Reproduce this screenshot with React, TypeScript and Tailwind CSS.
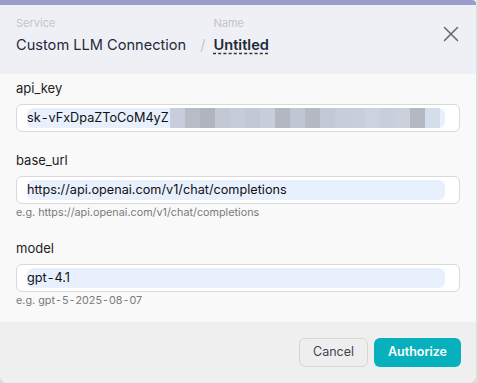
import React from "react";

const blocks = [
  "#c7cdda", "#b8bcc6", "#b0b4be", "#c2c8d4", "#c6ccd8", "#c2c8d4", "#c8ced9", "#b3b7c1",
  "#c0c6d2", "#b4b9c3", "#c3c9d5", "#c7cdd9", "#c9cfda", "#cdd3de", "#c9cfda", "#cbd1dc", "#b4b8c2", "#d5dcea",
];

function H() {
  return <span className="mx-[1px]">-</span>;
}

function Field({ label, children, hint }: { label: string; children: React.ReactNode; hint?: React.ReactNode }) {
  return (
    <div className="flex flex-col">
      <div className="text-[13px] leading-[18px] text-[#222]">{label}</div>
      <div className="mt-[7px] h-[28px] rounded-[6px] border border-[#d9d9d9] bg-white flex items-center pl-[10px] pr-[14px]">
        {children}
      </div>
      {hint && <div className="mt-[2px] text-[10.8px] leading-[14px] text-[#7a7a7a] whitespace-nowrap">{hint}</div>}
    </div>
  );
}

export default function App() {
  return (
    <div className="w-[478px] h-[383px] bg-[#dcdcdc] overflow-hidden" style={{ fontFamily: "Inter, 'Noto Sans', sans-serif" }}>
      <div className="w-[476px] h-[383px] rounded-b-[8px] overflow-hidden flex flex-col bg-[#f9f9f9]">
        <div className="h-[5px] bg-[#9b9bcb] rounded-tr-[4px]" />
        <div className="h-[69px] bg-[#eff0f5] flex pl-[16px] pt-[10px] relative">
          <div className="flex flex-col">
            <div className="text-[11px] leading-[16px] text-[#c4c4c4]">Service</div>
            <div className="mt-[3px] text-[14.6px] leading-[22px] text-[#1e2a3b]">Custom LLM Connection</div>
          </div>
          <div className="ml-[14px] mt-[19px] text-[14.6px] leading-[22px] text-[#c4c4c4]">/</div>
          <div className="ml-[8px] flex flex-col">
            <div className="text-[11px] leading-[16px] text-[#c4c4c4]">Name</div>
            <div className="mt-[3px] text-[14.6px] leading-[22px] font-semibold text-[#1e2a3b]">
              <span className="underline decoration-dashed decoration-[#333] underline-offset-[3px]">Untitled</span>
            </div>
          </div>
          <svg className="absolute left-[443px] top-[21px]" width="16" height="16" viewBox="0 0 16 16" fill="none">
            <path d="M1.5 1.5 L14.5 14.5 M14.5 1.5 L1.5 14.5" stroke="#666" strokeWidth="1.5" strokeLinecap="round" />
          </svg>
        </div>
        <div className="h-[248px] bg-[#f9f9f9] px-[16px] pt-[5px] flex flex-col gap-[19px]">
          <Field label="api_key">
            <div className="h-[20px] flex-1 rounded-[6px] bg-[#e8f0fe] flex items-center overflow-hidden">
              <span className="text-[12.7px] text-[#111] whitespace-nowrap">sk<H />vFxDpaZToCoM4yZ</span>
              <div className="flex h-[20px] ml-[1px] flex-1">
                {blocks.map((c, i) => (
                  <div key={i} className="h-full w-[15px] shrink-0" style={{ background: c }} />
                ))}
              </div>
            </div>
          </Field>
          <Field label="base_url" hint="e.g. https://api.openai.com/v1/chat/completions">
            <div className="h-[20px] flex-1 rounded-[6px] bg-[#e8f0fe] flex items-center">
              <span className="text-[12.7px] text-[#111] whitespace-nowrap">https://api.openai.com/v1/chat/completions</span>
            </div>
          </Field>
          <Field label="model" hint={<>e.g. gpt<H />5<H />2025<H />08<H />07</>}>
            <div className="h-[20px] flex-1 rounded-[6px] bg-[#e8f0fe] flex items-center">
              <span className="text-[12.7px] text-[#111] whitespace-nowrap">gpt<H />4.1</span>
            </div>
          </Field>
        </div>
        <div className="flex-1 bg-[#efefef] flex justify-end items-start pt-[16px] pr-[15px] gap-[6px]">
          <button className="h-[29px] w-[69px] rounded-[6px] border border-[#d6d6d6] bg-[#eeeeee] text-[12.5px] text-[#3d4553]">Cancel</button>
          <button className="h-[29px] w-[87px] rounded-[6px] bg-[#06b1bd] text-[12.5px] font-semibold text-white">Authorize</button>
        </div>
      </div>
    </div>
  );
}
